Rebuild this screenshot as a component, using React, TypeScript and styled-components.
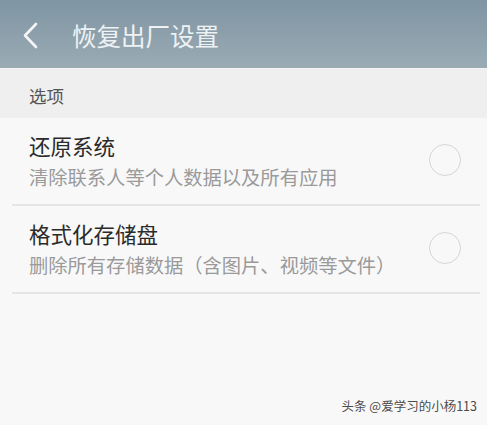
import React from 'react'
import styled, { createGlobalStyle } from 'styled-components'

const Global = createGlobalStyle`
  html, body { margin: 0; padding: 0; }
  body {
    width: 487px;
    height: 425px;
    overflow: hidden;
    background: #f8f8f8;
    font-family: "Noto Sans CJK SC", "Noto Sans", sans-serif;
  }
`

const options = [
  { title: '还原系统', desc: '清除联系人等个人数据以及所有应用' },
  { title: '格式化存储盘', desc: '删除所有存储数据（含图片、视频等文件）' },
]

export default function App() {
  return (
    <>
      <Global />
      <Page>
        <Header>
          <Back>
            <svg width="17" height="27" viewBox="0 0 17 27">
              <path d="M14 2 L3 13.5 L14 25" fill="none" stroke="#f4f6f7" strokeWidth="2.6" strokeLinecap="round" strokeLinejoin="round" />
            </svg>
          </Back>
          <Title>恢复出厂设置</Title>
        </Header>
        <Section>选项</Section>
        <List>
          {options.map(o => (
            <Row key={o.title}>
              <Texts>
                <RowTitle>{o.title}</RowTitle>
                <RowDesc>{o.desc}</RowDesc>
              </Texts>
              <Radio />
            </Row>
          ))}
        </List>
        <Watermark>头条 @爱学习的小杨113</Watermark>
      </Page>
    </>
  )
}

const Page = styled.div`
  position: relative;
  width: 487px;
  height: 425px;
  background: #f8f8f8;
`

const Header = styled.div`
  height: 69px;
  display: flex;
  align-items: center;
  background: linear-gradient(#7f95a3, #9aabb4);
  border-bottom: 1px solid #f4f4f4;
  box-sizing: border-box;
  padding-top: 2px;
`

const Back = styled.div`
  width: 72px;
  padding-left: 22px;
  box-sizing: border-box;
  display: flex;
  align-items: center;
  height: 27px;
`

const Title = styled.div`
  font-size: 24.5px;
  color: #eef2f4;
`

const Section = styled.div`
  height: 49px;
  background: #efefef;
  padding-left: 29px;
  display: flex;
  align-items: center;
  padding-top: 3px;
  box-sizing: border-box;
  font-size: 17.5px;
  color: #555;
`

const List = styled.div`
  padding: 0 7px 0 12px;
`

const Row = styled.div`
  height: 88px;
  display: flex;
  align-items: center;
  justify-content: space-between;
  border-bottom: 2px solid #e6e6e6;
  box-sizing: border-box;
  padding: 0 19px 0 17px;
`

const Texts = styled.div`
  display: flex;
  flex-direction: column;
  margin-top: -1px;
`

const RowTitle = styled.div`
  font-size: 21.5px;
  color: #2a2a2a;
  line-height: 30px;
`

const RowDesc = styled.div`
  font-size: 19.3px;
  color: #9a9a9a;
  line-height: 28px;
  margin-top: 2px;
`

const Radio = styled.div`
  width: 30px;
  height: 30px;
  border-radius: 50%;
  border: 1.5px solid #d6d6d6;
  margin-top: -2px;
`

const Watermark = styled.div`
  position: absolute;
  right: 10px;
  bottom: 10px;
  font-size: 12.5px;
  color: #4a4a4a;
  text-shadow: 0 0 2px #fff;
`
